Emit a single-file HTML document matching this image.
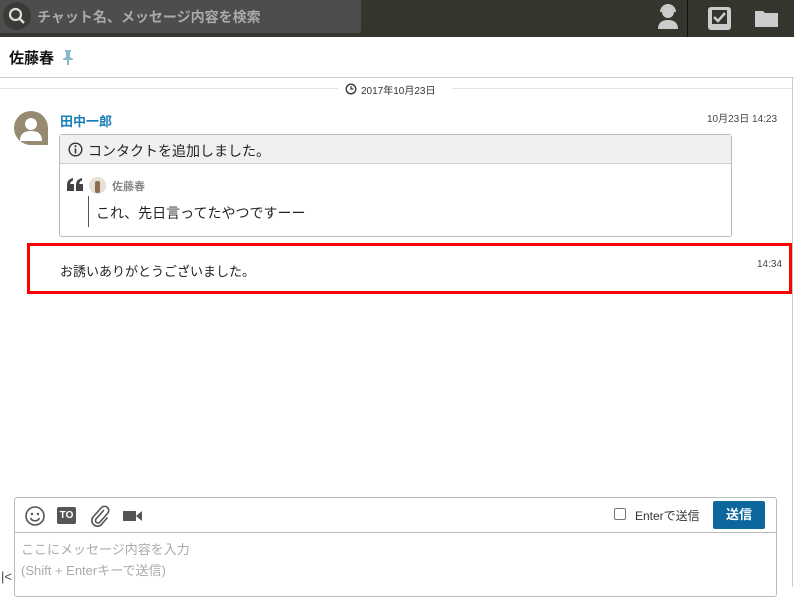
<!DOCTYPE html>
<html><head><meta charset="utf-8"><style>
*{margin:0;padding:0;box-sizing:border-box}
body{width:794px;height:587px;overflow:hidden;background:#fff;font-family:"Liberation Sans","Noto Sans CJK JP",sans-serif;position:relative;color:#222}
.abs{position:absolute}
</style></head><body>
<div class="abs" style="left:0;top:0;width:794px;height:37px;background:#35352d"></div>
<div class="abs" style="left:0;top:0;width:361px;height:33px;background:#4d4d4d;border-radius:0 0 3px 0"></div>
<div class="abs" style="left:3px;top:2px;width:28px;height:28px;border-radius:50%;background:#3a3a36"></div>
<svg class="abs" style="left:8px;top:7px" width="18" height="18"><circle cx="7.5" cy="7.5" r="5.5" fill="none" stroke="#ddd" stroke-width="2.2"/><path d="M11.5 11.5L16 16" stroke="#ddd" stroke-width="2.4"/></svg>
<div class="abs" style="left:37px;top:7px;font-size:14px;color:#aaa;font-weight:bold">チャット名、メッセージ内容を検索</div>
<svg class="abs" style="left:656px;top:3px" width="24" height="28"><circle cx="12" cy="9" r="6" fill="#ccc"/><path d="M5 9a7 7 0 0 1 14 0" fill="none" stroke="#ccc" stroke-width="2"/><path d="M2 26c0-7 5-9 10-9s10 2 10 9z" fill="#ccc"/></svg>
<div class="abs" style="left:687px;top:0;width:1px;height:37px;background:#111"></div>
<svg class="abs" style="left:707px;top:6px" width="25" height="25"><rect x="1" y="1" width="23" height="23" rx="3" fill="#ccc"/><rect x="5" y="4" width="15" height="14" fill="#35352d"/><path d="M7 11l4 4 7-8" stroke="#ccc" stroke-width="2.5" fill="none"/><rect x="9" y="18" width="7" height="3" fill="#ccc"/></svg>
<svg class="abs" style="left:754px;top:8px" width="26" height="20"><path d="M1 3h8l2 2h13v14H1z" fill="#ccc"/></svg>
<div class="abs" style="left:9px;top:47px;font-size:15px;font-weight:bold;color:#111">佐藤春</div>
<svg class="abs" style="left:62px;top:49px" width="12" height="16"><path d="M3 1h6v2H8v5l3 2v1H7v5H5v-5H1v-1l3-2V3H3z" fill="#8ab8cc"/></svg>
<div class="abs" style="left:0;top:77px;width:794px;height:1px;background:#ccc"></div>
<div class="abs" style="left:792px;top:77px;width:1px;height:510px;background:#ccc"></div>
<div class="abs" style="left:0;top:88px;width:338px;height:1px;background:#e2e2e2"></div>
<div class="abs" style="left:452px;top:88px;width:340px;height:1px;background:#e2e2e2"></div>
<svg class="abs" style="left:345px;top:83px" width="12" height="12"><circle cx="6" cy="6" r="4.8" fill="none" stroke="#333" stroke-width="1.3"/><path d="M6 3v3h2.5" stroke="#333" stroke-width="1.2" fill="none"/></svg>
<div class="abs" style="left:361px;top:82px;font-size:10px;color:#333">2017年10月23日</div>
<div class="abs" style="left:14px;top:111px;width:34px;height:34px;border-radius:50% 50% 0 50%;background:#968a70;overflow:hidden"><svg width="34" height="34"><circle cx="17" cy="13" r="6" fill="#fff"/><path d="M6 30c0-8 5-10 11-10s11 2 11 10z" fill="#fff"/></svg></div>
<div class="abs" style="left:60px;top:111px;font-size:13px;font-weight:bold;color:#1b7fb7">田中一郎</div>
<div class="abs" style="left:707px;top:110px;font-size:10px;color:#444">10月23日 14:23</div>
<div class="abs" style="left:59px;top:134px;width:673px;height:103px;border:1px solid #bbb;border-radius:3px"></div>
<div class="abs" style="left:60px;top:135px;width:671px;height:29px;background:#f0f0f0;border-bottom:1px solid #ccc"></div>
<svg class="abs" style="left:68px;top:142px" width="15" height="15"><circle cx="7.5" cy="7.5" r="6.3" fill="none" stroke="#333" stroke-width="1.4"/><rect x="6.7" y="6.5" width="1.6" height="5" fill="#333"/><circle cx="7.5" cy="4.3" r="1" fill="#333"/></svg>
<div class="abs" style="left:88px;top:141px;font-size:14px;color:#222">コンタクトを追加しました。</div>
<svg class="abs" style="left:67px;top:178px" width="16" height="13"><path d="M0 13V7C0 3 2 1 6 0v2.5C4 3.2 3.3 4.5 3.3 6H7v7zM9 13V7c0-4 2-6 6-7v2.5c-2 .7-2.7 2-2.7 3.5H16v7z" fill="#444"/></svg>
<div class="abs" style="left:89px;top:177px;width:17px;height:17px;border-radius:50%;background:#e8e0d6;overflow:hidden"><div style="margin:4px 0 0 6px;width:5px;height:12px;background:#8a6f55;border-radius:2px"></div></div>
<div class="abs" style="left:112px;top:178px;font-size:11px;color:#888;font-weight:bold">佐藤春</div>
<div class="abs" style="left:88px;top:196px;width:1px;height:31px;background:#555"></div>
<div class="abs" style="left:96px;top:203px;font-size:14px;color:#222">これ、先日言ってたやつですーー</div>
<div class="abs" style="left:27px;top:243px;width:765px;height:51px;border:3px solid #f00"></div>
<div class="abs" style="left:60px;top:261px;font-size:13px;color:#222">お誘いありがとうございました。</div>
<div class="abs" style="left:757px;top:259px;font-size:10px;color:#444">14:34</div>
<div class="abs" style="left:14px;top:497px;width:763px;height:100px;border:1px solid #bbb;border-radius:3px"></div>
<div class="abs" style="left:15px;top:532px;width:761px;height:1px;background:#bbb"></div>
<svg class="abs" style="left:24px;top:505px" width="22" height="22"><circle cx="11" cy="11" r="9" fill="none" stroke="#555" stroke-width="1.6"/><circle cx="8" cy="9" r="1.2" fill="#555"/><circle cx="14" cy="9" r="1.2" fill="#555"/><path d="M6.5 13a5 5 0 0 0 9 0" stroke="#555" stroke-width="1.5" fill="none"/></svg>
<div class="abs" style="left:57px;top:507px;width:19px;height:17px;background:#555;border-radius:2px;color:#fff;font-size:10px;font-weight:bold;text-align:center;line-height:17px">TO</div>
<svg class="abs" style="left:89px;top:505px" width="22" height="22"><path d="M15 5l-8 9a2.5 2.5 0 0 0 3.5 3.5l8-9a4 4 0 0 0-6-6l-8 9a5.5 5.5 0 0 0 8 8l6-7" fill="none" stroke="#555" stroke-width="1.6"/></svg>
<svg class="abs" style="left:122px;top:509px" width="22" height="14"><rect x="1" y="2" width="13" height="10" fill="#555"/><path d="M14 7l6-5v10z" fill="#555"/></svg>
<div class="abs" style="left:614px;top:508px;width:12px;height:12px;border:1px solid #777;border-radius:2px"></div>
<div class="abs" style="left:635px;top:507px;font-size:12px;color:#333">Enterで送信</div>
<div class="abs" style="left:713px;top:501px;width:52px;height:28px;background:#0c679c;border-radius:2px;color:#fff;font-size:13px;font-weight:bold;text-align:center;line-height:28px">送信</div>
<div class="abs" style="left:21px;top:539px;font-size:13px;color:#aaa;line-height:21px">ここにメッセージ内容を入力<br>(Shift + Enterキーで送信)</div>
<div class="abs" style="left:1px;top:569px;font-size:13px;color:#444">|&lt;</div>
</body></html>
